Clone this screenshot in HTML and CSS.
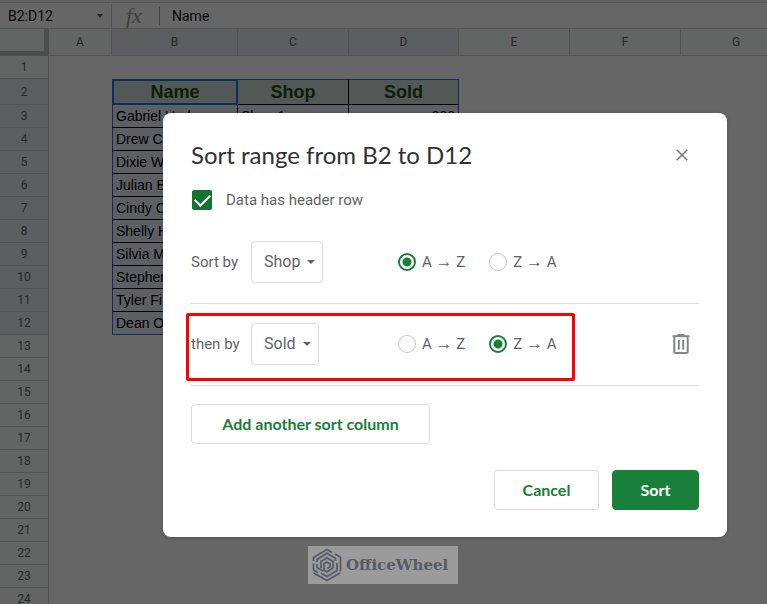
FILE: index.html
```
<!DOCTYPE html>
<html lang="en">

<head>
  <meta charset="utf-8">
  <title>Sort range</title>
  <link rel="stylesheet" href="styles.css">
</head>

<body>
  <div class="sheet">
    <div class="formula-bar">
      <div class="name-box">B2:D12 <span class="caret"></span></div>
      <div class="fx">fx</div>
      <div class="formula">Name</div>
    </div>

    <table class="grid">
      <colgroup>
        <col class="col-num">
        <col class="col-a">
        <col class="col-b">
        <col class="col-c">
        <col class="col-d">
        <col class="col-c">
        <col class="col-c">
        <col class="col-c">
      </colgroup>
      <thead>
        <tr>
          <th class="corner"></th>
          <th>A</th>
          <th class="on">B</th>
          <th class="on">C</th>
          <th class="on">D</th>
          <th>E</th>
          <th>F</th>
          <th>G</th>
        </tr>
      </thead>
      <tbody id="rows"></tbody>
    </table>
  </div>

  <div class="overlay">
    <form class="modal" role="dialog" aria-labelledby="title">
      <div class="modal-head">
        <h1 id="title">Sort range from B2 to D12</h1>
        <button type="button" class="icon-btn close" aria-label="Close">
          <svg width="12" height="12" viewBox="0 0 12 12">
            <path d="M.7.7l10.6 10.6M11.3.7L.7 11.3" stroke="#77797c" stroke-width="1.5" />
          </svg>
        </button>
      </div>

      <label class="check">
        <input type="checkbox" checked>
        <span>Data has header row</span>
      </label>

      <div class="sort-row">
        <label for="col1">Sort by</label>
        <div class="select shop">
          <select id="col1">
            <option>Name</option>
            <option selected>Shop</option>
            <option>Sold</option>
          </select>
        </div>
        <div class="radios">
          <label><input type="radio" name="order1" checked><span>A <i>→</i> Z</span></label>
          <label><input type="radio" name="order1"><span>Z <i>→</i> A</span></label>
        </div>
      </div>

      <div class="sort-row marked">
        <label for="col2">then by</label>
        <div class="select sold">
          <select id="col2">
            <option>Name</option>
            <option>Shop</option>
            <option selected>Sold</option>
          </select>
        </div>
        <div class="radios">
          <label><input type="radio" name="order2"><span>A <i>→</i> Z</span></label>
          <label><input type="radio" name="order2" checked><span>Z <i>→</i> A</span></label>
        </div>
        <button type="button" class="icon-btn trash" aria-label="Delete">
          <svg width="18" height="20" viewBox="0 0 18 20" fill="none" stroke="#80868b">
            <path d="M.5 2.2h17" stroke-width="2" />
            <path d="M5.5 1h7" stroke-width="2" />
            <path d="M2.3 3v14.5q0 1.5 1.5 1.5h10.4q1.5 0 1.5-1.5V3" stroke-width="2" />
            <path d="M6.8 6v9.5M11.2 6v9.5" stroke-width="2" />
          </svg>
        </button>
      </div>

      <button type="button" class="btn add">Add another sort column</button>

      <div class="actions">
        <button type="button" class="btn cancel">Cancel</button>
        <button type="submit" class="btn primary">Sort</button>
      </div>
    </form>
  </div>

  <div class="watermark">
    <svg width="30" height="34" viewBox="0 0 30 34" fill="none" stroke="#555a69" stroke-width="1.7">
      <path d="M1.5 13V9.5L15 1.5l5 3" />
      <path d="M5 14v-2.5L15 5.3l8.5 5V13" />
      <path d="M23 6l5.5 3.3V23.5" />
      <path d="M1.5 15.5v6.5l4.5 2.5M5 16v3.5l6 3.5" />
      <path d="M1.5 25L15 32.5l13-7.5" />
      <path d="M25 15v7.5L15 28.5l-6-3.5" />
      <path d="M9 20v-6.5l6-3.7 6 3.7v6.3L15 24l-3-1.8v-6.4l3-1.8 3 1.8v3L15 20.5" />
    </svg>
    <span>OfficeWheel</span>
  </div>

  <script>
    const names = [
      "Gabriel Hurley", "Drew Cook", "Dixie Webb", "Julian Bell", "Cindy Cole",
      "Shelly Hall", "Silvia Moss", "Stephen Lee", "Tyler Finn", "Dean Owens",
    ];
    const rowCount = 24;
    let html = "";

    for (let i = 1; i <= rowCount; i++) {
      const selected = i >= 2 && i <= 12;
      html += `<tr><th class="${selected ? "on" : ""}">${i}</th><td></td>`;
      if (i === 2) {
        html += `<td class="head active">Name</td><td class="head">Shop</td><td class="head last">Sold</td>`;
      } else if (selected) {
        const end = i === 12 ? " end" : "";
        html += `<td class="data first${end}">${names[i - 3]}</td>`;
        // only the first data row shows above the dialog
        html += i === 3
          ? `<td class="data">Shop 1</td><td class="data num last">200</td>`
          : `<td class="data${end}"></td><td class="data last${end}"></td>`;
      } else {
        html += "<td></td><td></td><td></td>";
      }
      html += "<td></td><td></td><td></td></tr>";
    }

    document.getElementById("rows").innerHTML = html;
  </script>
</body>

</html>
```
FILE: styles.css
```
* {
  box-sizing: border-box;
}

body {
  margin: 0;
  height: 100vh;
  overflow: hidden;
  position: relative;
  font-family: Roboto, "Liberation Sans", sans-serif;
  background: white;
}

.sheet {
  height: 100%;
  overflow: hidden;
}

/* formula bar */
.formula-bar {
  display: flex;
  align-items: center;
  height: 29px;
  padding-top: 2px;
  border-top: 2px solid #f4f4f4;
  border-bottom: 1px solid #d0d0d0;
  box-shadow: inset 0 1px 0 #dadada;
  font-size: 14px;
  color: #111;
}

.name-box {
  display: flex;
  align-items: center;
  justify-content: space-between;
  width: 112px;
  height: 100%;
  padding: 0 8px;
  border-right: 1px solid #ccc;
}

.caret {
  border: 3px solid transparent;
  border-top: 4px solid #555;
  border-bottom: 0;
}

.fx {
  width: 48px;
  padding-left: 14px;
  border-right: 1px solid #aaa;
  font: italic 22px/18px "Liberation Serif", serif;
  color: #999;
}

.formula {
  padding-left: 12px;
}

/* grid */
.grid {
  width: 792px;
  table-layout: fixed;
  border-collapse: separate;
  border-spacing: 0;
}

.col-num {
  width: 49px;
}

.col-a {
  width: 63px;
}

.col-b {
  width: 126px;
}

.col-c {
  width: 111px;
}

.col-d {
  width: 110px;
}

.grid th {
  height: 23px;
  padding: 0;
  border-right: 1px solid #ccc;
  border-bottom: 1px solid #ccc;
  background: #f8f9fa;
  font-size: 12px;
  font-weight: normal;
  line-height: 14px;
  color: #666;
}

.grid thead th {
  height: 27px;
}

.grid th.on {
  background: #e8eaed;
}

.grid th.corner {
  border-right: 5px solid #c0c0c0;
  border-bottom: 5px solid #c0c0c0;
}

.grid td {
  height: 23px;
  padding: 0 3px;
  font-family: "Liberation Sans", Arial, sans-serif;
  font-size: 14px;
  line-height: 18px;
  white-space: nowrap;
}

.grid .head {
  height: 26px;
  border-top: 1px solid #1a73e8;
  border-right: 1px solid #000;
  border-bottom: 1px solid #000;
  background: #cbdcd6;
  font-size: 18px;
  font-weight: bold;
  text-align: center;
  color: #274e13;
}

.grid .active {
  border: 2px solid #1a73e8;
}

.grid .data {
  border-right: 1px solid #000;
  border-bottom: 1px solid #000;
  background: #e6edf9;
}

.grid .num {
  text-align: right;
}

.grid .first {
  border-left: 1px solid #1a73e8;
}

.grid .last {
  border-right: 1px solid #1a73e8;
}

.grid .end {
  border-bottom: 1px solid #1a73e8;
}

/* dialog */
.overlay {
  position: absolute;
  inset: 0;
  display: flex;
  align-items: flex-start;
  padding: 113px 40px 0 163px;
  background: rgba(0, 0, 0, 0.6);
}

.modal {
  flex: 1;
  padding: 27px 28px;
  border-radius: 8px;
  background: white;
  box-shadow: 0 1px 4px rgba(0, 0, 0, 0.2);
  font-size: 15px;
  color: #5f6368;
}

.modal-head {
  display: flex;
  align-items: center;
  justify-content: space-between;
  height: 30px;
}

h1 {
  margin: 0;
  font-family: Lato, sans-serif;
  font-size: 24px;
  font-weight: 400;
  line-height: 30px;
  color: #303134;
}

.icon-btn {
  display: flex;
  padding: 0;
  border: none;
  background: none;
  cursor: pointer;
}

.close {
  margin-right: 11px;
}

.check {
  display: flex;
  align-items: center;
  gap: 13px;
  height: 20px;
  margin: 20px 0 12px;
}

.check input {
  appearance: none;
  display: grid;
  place-items: center;
  width: 20px;
  height: 20px;
  margin: 0 1px;
  border-radius: 2px;
  background: #137333;
}

.check input:checked::after {
  content: "";
  width: 13px;
  height: 7px;
  margin-bottom: 4px;
  border-left: 2px solid white;
  border-bottom: 2px solid white;
  rotate: -45deg;
}

.sort-row {
  position: relative;
  display: grid;
  grid-template-columns: 60px 147px 1fr auto;
  align-items: center;
  padding: 19px 0 20px;
  border-bottom: 1px solid #dadce0;
}

.marked::after {
  content: "";
  position: absolute;
  left: -5px;
  top: 9px;
  width: 389px;
  height: 68px;
  box-sizing: border-box;
  border: 3px solid red;
  border-radius: 2px;
  pointer-events: none;
}

.select {
  position: relative;
}

.select.shop {
  width: 72px;
}

.select.sold {
  width: 68px;
}

.select select {
  appearance: none;
  display: block;
  width: 100%;
  height: 42px;
  padding: 0 0 2px 12px;
  border: 1px solid #dadce0;
  border-radius: 4px;
  background: white;
  font: 16px Roboto, sans-serif;
  color: #5f6368;
}

.select::after {
  content: "";
  position: absolute;
  right: 8px;
  top: 19px;
  border: 4px solid transparent;
  border-top-color: #5f6368;
  border-bottom: 0;
  pointer-events: none;
}

.radios {
  display: flex;
  gap: 24px;
}

.radios label {
  display: flex;
  align-items: center;
  gap: 6px;
  line-height: 18px;
}

.radios i {
  font-family: "Liberation Sans", Arial, sans-serif;
  font-size: 17px;
  font-style: normal;
  line-height: 1;
}

.radios input {
  appearance: none;
  width: 18px;
  height: 18px;
  margin: 0;
  border: 1px solid #c4c6c9;
  border-radius: 50%;
}

.radios input:checked {
  border: 2px solid #188038;
  background: radial-gradient(circle, #188038 4px, transparent 5px);
}

.trash {
  margin-right: 9px;
}

.btn {
  height: 40px;
  padding: 0 0 2px;
  border: 1px solid #dadce0;
  border-radius: 4px;
  background: white;
  font-family: Lato, sans-serif;
  font-size: 16px;
  font-weight: 700;
  color: #188038;
  cursor: pointer;
}

.add {
  width: 239px;
  margin-top: 18px;
}

.actions {
  display: flex;
  justify-content: flex-end;
  gap: 13px;
  margin-top: 26px;
}

.cancel {
  width: 105px;
}

.primary {
  width: 87px;
  border-color: #188038;
  background: #188038;
  color: white;
}

.watermark {
  position: absolute;
  left: 308px;
  bottom: 20px;
  display: flex;
  align-items: center;
  gap: 4px;
  width: 150px;
  height: 38px;
  padding-left: 4px;
  background: #9b9b9b;
  font: bold 15px "DejaVu Serif", serif;
  color: #555a69;
}
```
